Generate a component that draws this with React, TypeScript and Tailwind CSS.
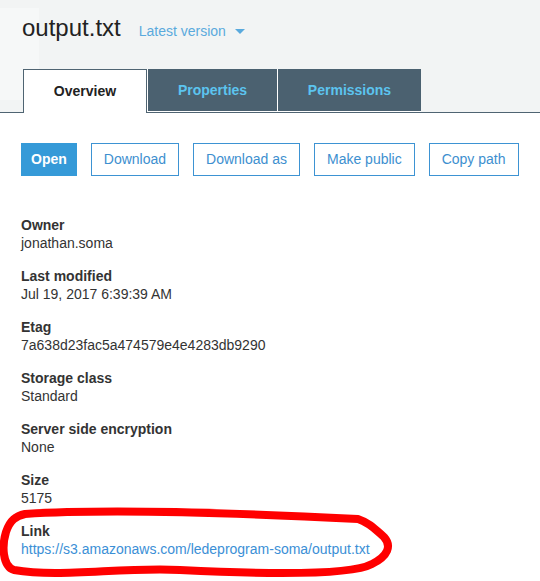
import React from 'react';

const buttons = ['Download', 'Download as', 'Make public', 'Copy path'];

const props: { label: string; value: string; link?: boolean }[] = [
  { label: 'Owner', value: 'jonathan.soma' },
  { label: 'Last modified', value: 'Jul 19, 2017 6:39:39 AM' },
  { label: 'Etag', value: '7a638d23fac5a474579e4e4283db9290' },
  { label: 'Storage class', value: 'Standard' },
  { label: 'Server side encryption', value: 'None' },
  { label: 'Size', value: '5175' },
  { label: 'Link', value: 'https://s3.amazonaws.com/ledeprogram-soma/output.txt', link: true },
];

export default function App() {
  return (
    <div
      className="relative w-[540px] h-[581px] overflow-hidden bg-white text-[#333]"
      style={{ fontFamily: '"Liberation Sans", Arial, sans-serif' }}
    >
      {/* header */}
      <div className="relative bg-[#f2f4f4] pt-[13px]">
        <div className="absolute left-0 top-[8px] w-[39px] h-[92px] bg-[#f6f8f8]" />
        <div className="relative flex items-baseline pl-[22px] h-[30px]">
          <span className="text-[24px] leading-[30px] text-[#222]">output.txt</span>
          <span className="ml-[18px] flex items-center text-[14px] text-[#5aaadd]">
            Latest version
            <span className="ml-[9px] inline-block w-0 h-0 border-l-[5px] border-r-[5px] border-t-[5px] border-l-transparent border-r-transparent border-t-[#5aaadd]" />
          </span>
        </div>
        <div className="relative mt-[26px] flex items-start pl-[23px] border-b border-[#4f6472]">
          <div className="w-[124px] h-[44px] -mb-px bg-white border-l border-t border-r border-[#4f6472] flex items-center justify-center text-[14px] font-bold text-[#222]">
            Overview
          </div>
          <div className="w-[130px] h-[43px] bg-[#4b6170] border-l border-b border-white flex items-center justify-center text-[14px] font-bold text-[#5cc4ef]">
            Properties
          </div>
          <div className="w-[144px] h-[43px] bg-[#4b6170] border-l border-b border-white flex items-center justify-center text-[14px] font-bold text-[#5cc4ef]">
            Permissions
          </div>
        </div>
      </div>

      {/* body */}
      <div className="px-[21px]">
        <div className="mt-[30px] flex gap-[14px]">
          <button className="h-[33px] px-[10px] bg-[#359ad8] text-white text-[14px] font-bold">Open</button>
          {buttons.map((b) => (
            <button
              key={b}
              className="h-[33px] px-[12px] border border-[#3d93d3] text-[#3d8fcf] text-[14px] bg-white"
            >
              {b}
            </button>
          ))}
        </div>

        <div className="mt-[40px] flex flex-col">
          {props.map((p) => (
            <div key={p.label} className="mb-[15px] text-[14px] leading-[18px]">
              <div className="font-bold text-[#333]">{p.label}</div>
              {p.link ? (
                <a className="text-[#3b8fd6]">{p.value}</a>
              ) : (
                <div className="text-[#333]">{p.value}</div>
              )}
            </div>
          ))}
        </div>
      </div>

      {/* red marker annotation */}
      <svg className="absolute left-0 top-0 pointer-events-none" width="540" height="581" viewBox="0 0 540 581">
        <path
          d="M 25 514 C 120 508, 260 514, 358 519 C 370 523, 376 530, 384 537 C 392 546, 388 556, 372 564 C 350 576, 260 574, 180 570 C 120 567, 60 578, 14 570 C 2 566, 2 545, 6 532 C 10 520, 16 516, 25 514 Z"
          fill="none"
          stroke="#ff0000"
          strokeWidth="8"
          strokeLinejoin="round"
        />
      </svg>
    </div>
  );
}
